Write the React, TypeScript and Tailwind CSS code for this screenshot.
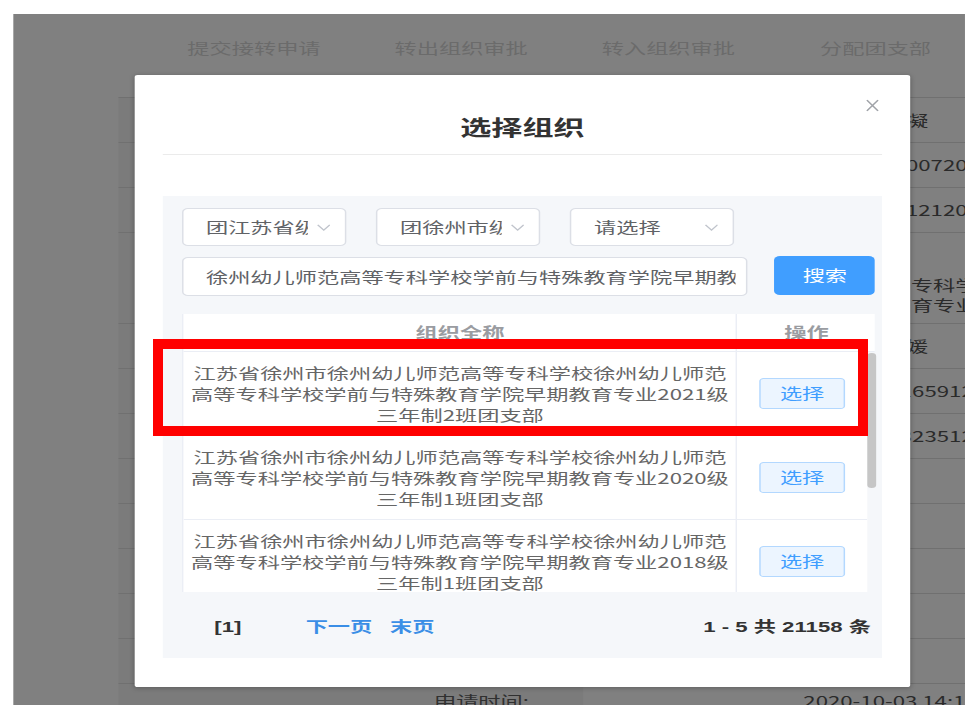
import { useState } from "react";

// the reference shot is stretched sideways, so the page is built narrow
// and widened once with scale-x on the wrapper
const rows = [
  { grade: "2021", cls: "2" },
  { grade: "2020", cls: "1" },
  { grade: "2018", cls: "1" },
];

const bgRows: { h: string; label?: string; lines?: string[]; pad?: string }[] = [
  { h: "h-[45px]", lines: ["王凝"] },
  { h: "h-[45px]", lines: ["320382199007201234"] },
  { h: "h-[45px]", lines: ["320311200121200234"] },
  { h: "h-[91px]", lines: ["专科学", "育专业"], pad: "items-start justify-start pl-[221.6px] pt-[42px]" },
  { h: "h-[45px]", lines: ["王媛"] },
  { h: "h-[45px]", lines: ["13852165912"] },
  { h: "h-[45px]", lines: ["15062323512"] },
  { h: "h-[45px]" },
  { h: "h-[45px]" },
  { h: "h-[45px]" },
  { h: "h-[45px]" },
  { h: "h-[45px]" },
  { h: "h-[45px]", label: "申请时间:", lines: ["2020-10-03 14:11:22"], pad: "items-center justify-start pt-[7px]" },
];

const Chevron = () => (
  <svg viewBox="0 0 14 8" preserveAspectRatio="none" className="h-[7px] w-[9.5px] shrink-0">
    <path d="M1 1L7 7L13 1" fill="none" stroke="#c0c4cc" strokeWidth="1" vectorEffect="non-scaling-stroke" />
  </svg>
);

const Select = ({ text }: { text: string }) => (
  <div className="flex h-[38px] w-[110.8px] shrink-0 items-center gap-[6px] rounded-[4px] border border-[#dcdfe6] bg-white pl-[14.9px] pr-[10px]">
    <span className="flex-1 overflow-hidden whitespace-nowrap text-[15px] leading-[20px] text-[#606266]">{text}</span>
    <Chevron />
  </div>
);

const App = () => {
  const [picked, setPicked] = useState<number | null>(null);

  return (
    <div className="relative h-[711px] w-[965px] overflow-hidden bg-white font-['Noto_Sans_CJK_SC','Liberation_Sans',sans-serif]">
      <div className="h-[711px] w-[652px] origin-top-left scale-x-[1.48] pl-[8.8px] pt-[14px]">
        <div className="relative h-[691px] w-[643.2px] overflow-hidden bg-[#808080]">
          {/* tabs of the page behind */}
          <div className="flex h-[83px] pl-[92.8px] pt-[24px]">
            {["提交接转申请", "转出组织审批", "转入组织审批", "分配团支部"].map((t) => (
              <div key={t} className="w-[140px] shrink-0 text-center text-[15px] leading-[20px] text-[#6b6b6b]">
                {t}
              </div>
            ))}
          </div>

          {/* detail table of the page behind */}
          <div className="ml-[70.9px] flex w-[750.7px] flex-none flex-col border-t border-[#707070]">
            {bgRows.map((r, i) => (
              <div key={i} className={`flex ${r.h} shrink-0 border-b border-[#707070]`}>
                <div className="flex w-[314.2px] shrink-0 items-start justify-end bg-[#7b7b7b] pr-[36.5px] pt-[7px] text-[15px] leading-[20px] text-[#303030]">
                  {r.label}
                </div>
                <div
                  className={`flex w-[436.5px] shrink-0 flex-col text-[15px] leading-[20px] text-[#2a2a2a] ${
                    r.pad ?? "items-center justify-center"
                  }`}
                >
                  {r.lines?.map((l) => (
                    <div key={l} className="whitespace-nowrap">
                      {l}
                    </div>
                  ))}
                </div>
              </div>
            ))}
          </div>

          {/* dialog */}
          <div className="absolute left-[82.4px] top-[61px] h-[612px] w-[523.6px] rounded-[2px] bg-white px-[18.6px] shadow-[0_1px_4px_rgba(0,0,0,0.25)]">
            <button className="absolute right-[20.3px] top-[24px] flex h-[13px] w-[9px] items-center justify-center">
              <svg viewBox="0 0 12 12" preserveAspectRatio="none" className="h-[13px] w-[9px]">
                <path d="M1 1L11 11M11 1L1 11" stroke="#a0a3a8" strokeWidth="1.1" vectorEffect="non-scaling-stroke" />
              </svg>
            </button>

            <div className="flex h-[80px] items-center justify-center border-b border-[#ebebeb] pt-[22px]">
              <span className="text-[21px] font-bold leading-[28px] text-[#333]">选择组织</span>
            </div>

            <div className="mt-[41px] flex h-[462px] flex-col bg-[#f5f7fa] pl-[13.5px] pr-[4.7px] pt-[12px]">
              <div className="flex gap-[20.3px]">
                <Select text="团江苏省级团委" />
                <Select text="团徐州市级团委" />
                <Select text="请选择" />
              </div>

              <div className="mt-[11px] flex gap-[18.2px]">
                <div className="flex h-[39px] w-[381.8px] shrink-0 items-center overflow-hidden rounded-[4px] border border-[#dcdfe6] bg-white pl-[14.9px] pr-[7px]">
                  <span className="overflow-hidden whitespace-nowrap text-[15px] leading-[20px] text-[#606266]">
                    徐州幼儿师范高等专科学校学前与特殊教育学院早期教育
                  </span>
                </div>
                <button className="-mt-px flex h-[39px] w-[68.2px] shrink-0 items-center justify-center rounded-[4px] bg-[#409eff] text-[15px] text-white">
                  搜索
                </button>
              </div>

              {/* result table */}
              <div className="mt-[18px] w-[468.2px] border-l border-[#ebeef5]">
                <div className="flex h-[38px] border-b border-[#ebeef5] bg-white">
                  <div className="flex w-[373px] shrink-0 items-center justify-center text-[15px] font-bold text-[#9a9ca1]">组织全称</div>
                  <div className="flex flex-1 items-center justify-center border-l border-[#ebeef5] text-[15px] font-bold text-[#9a9ca1]">
                    操作
                  </div>
                </div>
                <div className="flex h-[240px]">
                  <div className="w-[461.4px] shrink-0 overflow-hidden bg-white">
                    {rows.map((r, i) => (
                      <div key={i} className="flex h-[84px] border-b border-[#ebeef5]">
                        <div className="flex w-[373px] shrink-0 flex-col items-center justify-center text-[15px] leading-[21px] text-[#666]">
                          <div className="whitespace-nowrap">江苏省徐州市徐州幼儿师范高等专科学校徐州幼儿师范</div>
                          <div className="whitespace-nowrap">高等专科学校学前与特殊教育学院早期教育专业{r.grade}级</div>
                          <div className="whitespace-nowrap">三年制{r.cls}班团支部</div>
                        </div>
                        <div className="flex flex-1 items-center justify-center border-l border-[#ebeef5]">
                          <button
                            onClick={() => setPicked(i)}
                            className={`flex h-[31px] w-[58.8px] items-center justify-center rounded-[3px] border border-[#b3d8ff] text-[15px] text-[#409eff] ${
                              picked === i ? "bg-[#d9ecff]" : "bg-[#ecf5ff]"
                            }`}
                          >
                            选择
                          </button>
                        </div>
                      </div>
                    ))}
                  </div>
                  <div className="w-[6.8px] shrink-0 pt-px">
                    <div className="h-[135px] rounded-full bg-[#c6c6c6]" />
                  </div>
                </div>
              </div>

              {/* pager */}
              <div className="flex h-[66px] items-center pl-[21.5px] pr-[3px] pt-[4px] font-['Liberation_Sans','Noto_Sans_CJK_SC',sans-serif] text-[15px] font-bold">
                <span className="text-[#333]">[1]</span>
                <span className="ml-[43.4px] text-[#3a8ee6]">下一页</span>
                <span className="ml-[12px] text-[#3a8ee6]">末页</span>
                <span className="ml-auto text-[#333]">1 - 5 共 21158 条</span>
              </div>
            </div>
          </div>
        </div>
      </div>

      {/* red annotation frame drawn on the screenshot */}
      <div className="pointer-events-none absolute left-[153px] top-[339px] h-[97px] w-[715px] border-[10px] border-[#ff0000]" />
    </div>
  );
};

export default App;
